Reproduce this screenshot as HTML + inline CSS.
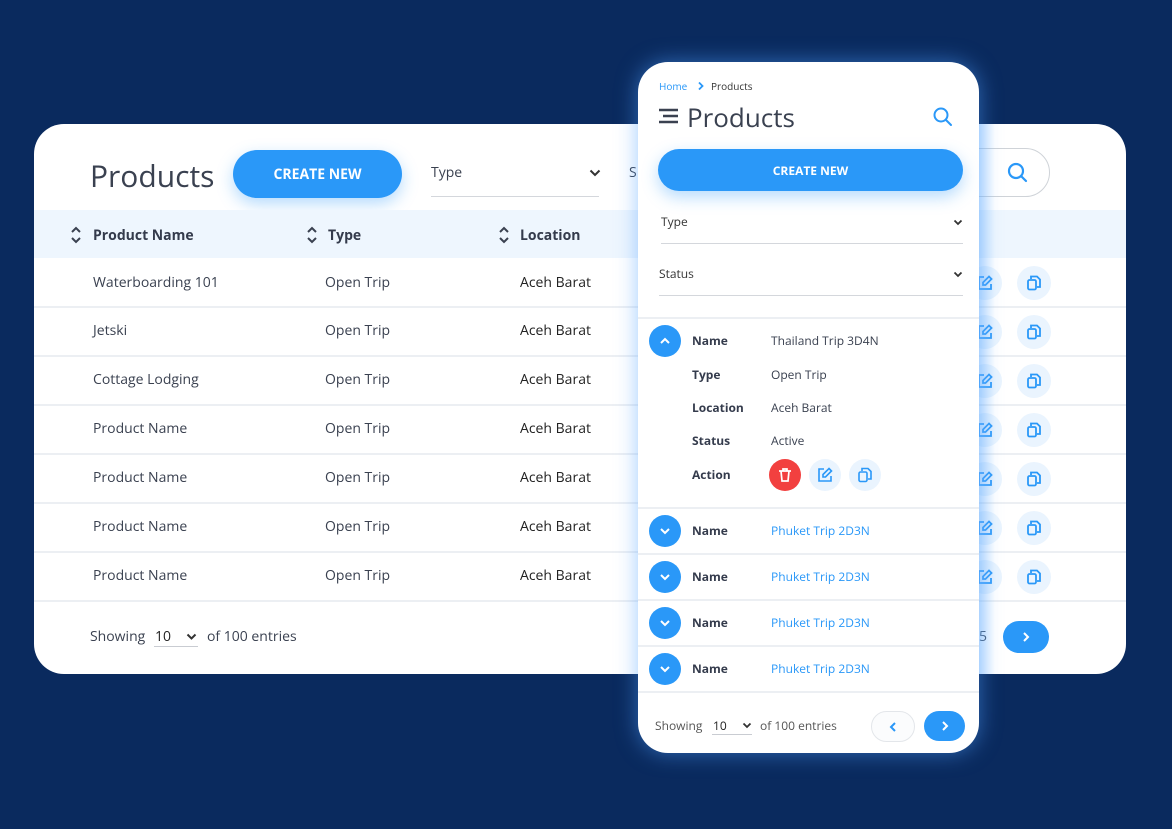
<!DOCTYPE html>
<html><head><meta charset="utf-8"><style>
*{margin:0;padding:0;box-sizing:border-box}
body{width:1172px;height:829px;background:#0a2a5e;position:relative;overflow:hidden;font-family:"Open Sans","Liberation Sans",sans-serif;color:#3a4150}
.a{position:absolute}
.card{left:34px;top:124px;width:1092px;height:550px;background:#fff;border-radius:30px;overflow:hidden}
.hdr{left:0;top:86px;width:1092px;height:48px;background:#eef6fe}
.sep{height:2px;background:#eceff3}
.t{font-size:14px;white-space:nowrap}
.th{font-size:14px;font-weight:bold;color:#343b4c}
.btn{background:#2a98f8;color:#fff;font-weight:bold;font-size:13px;display:flex;align-items:center;justify-content:center;border-radius:30px;box-shadow:0 6px 16px rgba(42,152,248,.35)}
.ic{width:34px;height:34px;border-radius:50%;background:#eaf4fe;display:flex;align-items:center;justify-content:center}
.mob{left:638px;top:62px;width:341px;height:691px;background:#fff;border-radius:30px;overflow:hidden;box-shadow:0 0 22px rgba(80,160,255,.55);z-index:5}
.circ{width:32px;height:32px;border-radius:50%;background:#2a98f8;display:flex;align-items:center;justify-content:center}
.lb{font-size:12px;font-weight:bold;color:#343b4c}
.vl{font-size:12px;color:#3a4150}
.lk{font-size:12px;color:#2a98f8}
</style></head><body>
<div class="a card">
  <div class="a" style="left:56px;top:31px;font-size:30px;color:#3a4150">Products</div>
  <div class="a btn" style="left:199px;top:26px;width:169px;height:48px;font-size:14px">CREATE NEW</div>
  <div class="a t" style="left:397px;top:39px">Type</div>
  <svg class="a" style="left:555px;top:45px" width="12" height="8"><path d="M1.5 1.5l4.5 4.5 4.5-4.5" stroke="#333" stroke-width="2" fill="none"/></svg>
  <div class="a" style="left:397px;top:72px;width:168px;height:1px;background:#d4d7dc"></div>
  <div class="a t" style="left:595px;top:39px">S</div>
  <div class="a" style="left:900px;top:24px;width:116px;height:49px;border:1px solid #cfd3d8;border-radius:25px"></div>
  <svg class="a" style="left:973px;top:38px" width="22" height="22"><circle cx="9" cy="9" r="7" stroke="#2a98f8" stroke-width="2.2" fill="none"/><path d="M14 14l5 5" stroke="#2a98f8" stroke-width="2.2" stroke-linecap="round"/></svg>
  <div class="a hdr"></div>
  <svg class="a" style="left:36px;top:101px" width="12" height="20"><path d="M2 7l4-4 4 4M2 13l4 4 4-4" stroke="#3a4150" stroke-width="2" fill="none"/></svg>
  <div class="a th" style="left:59px;top:102px">Product Name</div>
  <svg class="a" style="left:272px;top:101px" width="12" height="20"><path d="M2 7l4-4 4 4M2 13l4 4 4-4" stroke="#3a4150" stroke-width="2" fill="none"/></svg>
  <div class="a th" style="left:294px;top:102px">Type</div>
  <svg class="a" style="left:464px;top:101px" width="12" height="20"><path d="M2 7l4-4 4 4M2 13l4 4 4-4" stroke="#3a4150" stroke-width="2" fill="none"/></svg>
  <div class="a th" style="left:486px;top:102px">Location</div>
  <div class="a" style="left:0;top:134px;width:1092px">
    <div style="position:relative;height:48px"><span class="a t" style="left:59px;top:15px">Waterboarding 101</span><span class="a t" style="left:291px;top:15px">Open Trip</span><span class="a t" style="left:486px;top:15px;color:#222">Aceh Barat</span></div>
    <div class="sep"></div>
    <div style="position:relative;height:47px"><span class="a t" style="left:59px;top:13px">Jetski</span><span class="a t" style="left:291px;top:13px">Open Trip</span><span class="a t" style="left:486px;top:13px;color:#222">Aceh Barat</span></div>
    <div class="sep"></div>
    <div style="position:relative;height:47px"><span class="a t" style="left:59px;top:13px">Cottage Lodging</span><span class="a t" style="left:291px;top:13px">Open Trip</span><span class="a t" style="left:486px;top:13px;color:#222">Aceh Barat</span></div>
    <div class="sep"></div>
    <div style="position:relative;height:47px"><span class="a t" style="left:59px;top:13px">Product Name</span><span class="a t" style="left:291px;top:13px">Open Trip</span><span class="a t" style="left:486px;top:13px;color:#222">Aceh Barat</span></div>
    <div class="sep"></div>
    <div style="position:relative;height:47px"><span class="a t" style="left:59px;top:13px">Product Name</span><span class="a t" style="left:291px;top:13px">Open Trip</span><span class="a t" style="left:486px;top:13px;color:#222">Aceh Barat</span></div>
    <div class="sep"></div>
    <div style="position:relative;height:47px"><span class="a t" style="left:59px;top:13px">Product Name</span><span class="a t" style="left:291px;top:13px">Open Trip</span><span class="a t" style="left:486px;top:13px;color:#222">Aceh Barat</span></div>
    <div class="sep"></div>
    <div style="position:relative;height:47px"><span class="a t" style="left:59px;top:13px">Product Name</span><span class="a t" style="left:291px;top:13px">Open Trip</span><span class="a t" style="left:486px;top:13px;color:#222">Aceh Barat</span></div>
    <div class="sep"></div>
  </div>
  <div class="a t" style="left:56px;top:503px">Showing</div>
  <div class="a t" style="left:121px;top:503px;color:#222">10</div>
  <svg class="a" style="left:152px;top:509px" width="11" height="7"><path d="M1.5 1.5l4 4 4-4" stroke="#333" stroke-width="2" fill="none"/></svg>
  <div class="a" style="left:120px;top:522px;width:44px;height:1px;background:#c9ccd2"></div>
  <div class="a t" style="left:173px;top:503px">of 100 entries</div>
  <div class="a t" style="left:945px;top:503px">5</div>
  <div class="a btn" style="left:969px;top:497px;width:46px;height:32px;box-shadow:none"><svg width="10" height="12"><path d="M3 2l4 4-4 4" stroke="#fff" stroke-width="2" fill="none"/></svg></div>
</div>
<div class="a" style="left:968px;top:266px;width:100px;z-index:1">
  <div style="display:flex;flex-direction:column">
    <div style="height:49px;display:flex;gap:15px"><div class="ic"><svg width="16" height="16"><path d="M7 2H2v12h12V9" stroke="#2a98f8" stroke-width="1.8" fill="none"/><path d="M12 1.5l2.5 2.5-6 6H6V7.5z" stroke="#2a98f8" stroke-width="1.8" fill="none"/></svg></div><div class="ic"><svg width="16" height="16"><path d="M5 4V1.5h6l3 3V12h-3" stroke="#2a98f8" stroke-width="1.8" fill="none"/><rect x="2" y="5" width="8" height="9.5" rx="1.5" stroke="#2a98f8" stroke-width="1.8" fill="none"/></svg></div></div>
    <div style="height:49px;display:flex;gap:15px"><div class="ic"><svg width="16" height="16"><path d="M7 2H2v12h12V9" stroke="#2a98f8" stroke-width="1.8" fill="none"/><path d="M12 1.5l2.5 2.5-6 6H6V7.5z" stroke="#2a98f8" stroke-width="1.8" fill="none"/></svg></div><div class="ic"><svg width="16" height="16"><path d="M5 4V1.5h6l3 3V12h-3" stroke="#2a98f8" stroke-width="1.8" fill="none"/><rect x="2" y="5" width="8" height="9.5" rx="1.5" stroke="#2a98f8" stroke-width="1.8" fill="none"/></svg></div></div>
    <div style="height:49px;display:flex;gap:15px"><div class="ic"><svg width="16" height="16"><path d="M7 2H2v12h12V9" stroke="#2a98f8" stroke-width="1.8" fill="none"/><path d="M12 1.5l2.5 2.5-6 6H6V7.5z" stroke="#2a98f8" stroke-width="1.8" fill="none"/></svg></div><div class="ic"><svg width="16" height="16"><path d="M5 4V1.5h6l3 3V12h-3" stroke="#2a98f8" stroke-width="1.8" fill="none"/><rect x="2" y="5" width="8" height="9.5" rx="1.5" stroke="#2a98f8" stroke-width="1.8" fill="none"/></svg></div></div>
    <div style="height:49px;display:flex;gap:15px"><div class="ic"><svg width="16" height="16"><path d="M7 2H2v12h12V9" stroke="#2a98f8" stroke-width="1.8" fill="none"/><path d="M12 1.5l2.5 2.5-6 6H6V7.5z" stroke="#2a98f8" stroke-width="1.8" fill="none"/></svg></div><div class="ic"><svg width="16" height="16"><path d="M5 4V1.5h6l3 3V12h-3" stroke="#2a98f8" stroke-width="1.8" fill="none"/><rect x="2" y="5" width="8" height="9.5" rx="1.5" stroke="#2a98f8" stroke-width="1.8" fill="none"/></svg></div></div>
    <div style="height:49px;display:flex;gap:15px"><div class="ic"><svg width="16" height="16"><path d="M7 2H2v12h12V9" stroke="#2a98f8" stroke-width="1.8" fill="none"/><path d="M12 1.5l2.5 2.5-6 6H6V7.5z" stroke="#2a98f8" stroke-width="1.8" fill="none"/></svg></div><div class="ic"><svg width="16" height="16"><path d="M5 4V1.5h6l3 3V12h-3" stroke="#2a98f8" stroke-width="1.8" fill="none"/><rect x="2" y="5" width="8" height="9.5" rx="1.5" stroke="#2a98f8" stroke-width="1.8" fill="none"/></svg></div></div>
    <div style="height:49px;display:flex;gap:15px"><div class="ic"><svg width="16" height="16"><path d="M7 2H2v12h12V9" stroke="#2a98f8" stroke-width="1.8" fill="none"/><path d="M12 1.5l2.5 2.5-6 6H6V7.5z" stroke="#2a98f8" stroke-width="1.8" fill="none"/></svg></div><div class="ic"><svg width="16" height="16"><path d="M5 4V1.5h6l3 3V12h-3" stroke="#2a98f8" stroke-width="1.8" fill="none"/><rect x="2" y="5" width="8" height="9.5" rx="1.5" stroke="#2a98f8" stroke-width="1.8" fill="none"/></svg></div></div>
    <div style="height:49px;display:flex;gap:15px"><div class="ic"><svg width="16" height="16"><path d="M7 2H2v12h12V9" stroke="#2a98f8" stroke-width="1.8" fill="none"/><path d="M12 1.5l2.5 2.5-6 6H6V7.5z" stroke="#2a98f8" stroke-width="1.8" fill="none"/></svg></div><div class="ic"><svg width="16" height="16"><path d="M5 4V1.5h6l3 3V12h-3" stroke="#2a98f8" stroke-width="1.8" fill="none"/><rect x="2" y="5" width="8" height="9.5" rx="1.5" stroke="#2a98f8" stroke-width="1.8" fill="none"/></svg></div></div>
  </div>
</div>
<div class="a" style="left:979px;top:124px;width:16px;height:550px;background:linear-gradient(90deg,rgba(120,185,255,.35),rgba(120,185,255,0));z-index:2"></div>

<div class="a mob">
  <div class="a" style="left:21px;top:17px;font-size:10px;color:#2a98f8">Home</div>
  <svg class="a" style="left:59px;top:19px" width="8" height="10"><path d="M2 1.5l3.5 3.5L2 8.5" stroke="#2a98f8" stroke-width="1.8" fill="none"/></svg>
  <div class="a" style="left:73px;top:17px;font-size:10px;color:#333">Products</div>
  <svg class="a" style="left:19px;top:45px" width="22" height="18"><path d="M2 3h19M6 9h15M2 15h19" stroke="#3a4150" stroke-width="2.4"/></svg>
  <div class="a" style="left:49px;top:37px;font-size:26px;color:#3a4150">Products</div>
  <svg class="a" style="left:295px;top:45px" width="20" height="20"><circle cx="8" cy="8" r="6.5" stroke="#2a98f8" stroke-width="2" fill="none"/><path d="M13 13l5 5" stroke="#2a98f8" stroke-width="2" stroke-linecap="round"/></svg>
  <div class="a btn" style="left:20px;top:87px;width:305px;height:42px;font-size:12px">CREATE NEW</div>
  <div class="a" style="left:23px;top:151px;font-size:12px;color:#333">Type</div>
  <svg class="a" style="left:315px;top:157px" width="10" height="7"><path d="M1.5 1.5l3.5 3.5 3.5-3.5" stroke="#333" stroke-width="1.8" fill="none"/></svg>
  <div class="a" style="left:23px;top:181px;width:302px;height:1px;background:#d4d7dc"></div>
  <div class="a" style="left:21px;top:203px;font-size:12px;color:#333">Status</div>
  <svg class="a" style="left:315px;top:209px" width="10" height="7"><path d="M1.5 1.5l3.5 3.5 3.5-3.5" stroke="#333" stroke-width="1.8" fill="none"/></svg>
  <div class="a" style="left:21px;top:233px;width:304px;height:1px;background:#d4d7dc"></div>
  <div class="a sep" style="left:0;top:255px;width:341px"></div>
  <div class="a circ" style="left:11px;top:263px"><svg width="12" height="8"><path d="M2 6l4-4 4 4" stroke="#fff" stroke-width="2" fill="none"/></svg></div>
  <div class="a lb" style="left:54px;top:270px">Name</div><div class="a vl" style="left:133px;top:270px">Thailand Trip 3D4N</div>
  <div class="a lb" style="left:54px;top:304px">Type</div><div class="a vl" style="left:133px;top:304px">Open Trip</div>
  <div class="a lb" style="left:54px;top:337px">Location</div><div class="a vl" style="left:133px;top:337px">Aceh Barat</div>
  <div class="a lb" style="left:54px;top:370px">Status</div><div class="a vl" style="left:133px;top:370px">Active</div>
  <div class="a lb" style="left:54px;top:404px">Action</div>
  <div class="a circ" style="left:131px;top:397px;background:#f2403f"><svg width="14" height="16"><path d="M1 4h12M5 4V2h4v2M3 4l1 10h6l1-10" stroke="#fff" stroke-width="1.7" fill="none"/></svg></div>
  <div class="a circ" style="left:171px;top:397px;background:#eaf4fe"><svg width="16" height="16"><path d="M7 2H2v12h12V9" stroke="#2a98f8" stroke-width="1.6" fill="none"/><path d="M12 1.5l2.5 2.5-6 6H6V7.5z" stroke="#2a98f8" stroke-width="1.6" fill="none"/></svg></div>
  <div class="a circ" style="left:211px;top:397px;background:#eaf4fe"><svg width="16" height="16"><path d="M5 4V1.5h6l3 3V12h-3" stroke="#2a98f8" stroke-width="1.6" fill="none"/><rect x="2" y="5" width="8" height="9.5" rx="1.5" stroke="#2a98f8" stroke-width="1.6" fill="none"/></svg></div>
  <div class="a sep" style="left:0;top:445px;width:341px"></div>
  <div class="a circ" style="left:11px;top:453px"><svg width="12" height="8"><path d="M2 2l4 4 4-4" stroke="#fff" stroke-width="2" fill="none"/></svg></div>
  <div class="a lb" style="left:54px;top:460px">Name</div><div class="a lk" style="left:133px;top:460px">Phuket Trip 2D3N</div>
  <div class="a sep" style="left:0;top:491px;width:341px"></div>
  <div class="a circ" style="left:11px;top:499px"><svg width="12" height="8"><path d="M2 2l4 4 4-4" stroke="#fff" stroke-width="2" fill="none"/></svg></div>
  <div class="a lb" style="left:54px;top:506px">Name</div><div class="a lk" style="left:133px;top:506px">Phuket Trip 2D3N</div>
  <div class="a sep" style="left:0;top:537px;width:341px"></div>
  <div class="a circ" style="left:11px;top:545px"><svg width="12" height="8"><path d="M2 2l4 4 4-4" stroke="#fff" stroke-width="2" fill="none"/></svg></div>
  <div class="a lb" style="left:54px;top:552px">Name</div><div class="a lk" style="left:133px;top:552px">Phuket Trip 2D3N</div>
  <div class="a sep" style="left:0;top:583px;width:341px"></div>
  <div class="a circ" style="left:11px;top:591px"><svg width="12" height="8"><path d="M2 2l4 4 4-4" stroke="#fff" stroke-width="2" fill="none"/></svg></div>
  <div class="a lb" style="left:54px;top:598px">Name</div><div class="a lk" style="left:133px;top:598px">Phuket Trip 2D3N</div>
  <div class="a sep" style="left:0;top:629px;width:341px"></div>
  <div class="a" style="left:17px;top:655px;font-size:12px;color:#555">Showing</div>
  <div class="a" style="left:75px;top:655px;font-size:12px;color:#222">10</div>
  <svg class="a" style="left:104px;top:660px" width="10" height="7"><path d="M1.5 1.5l3.5 3.5 3.5-3.5" stroke="#333" stroke-width="1.8" fill="none"/></svg>
  <div class="a" style="left:74px;top:672px;width:40px;height:1px;background:#c9ccd2"></div>
  <div class="a" style="left:122px;top:655px;font-size:12px;color:#555">of 100 entries</div>
  <div class="a" style="left:233px;top:649px;width:44px;height:31px;border:1px solid #e3e6ea;border-radius:16px;background:#fbfcfd;display:flex;align-items:center;justify-content:center"><svg width="10" height="12"><path d="M7 2L3 6l4 4" stroke="#2a98f8" stroke-width="2" fill="none"/></svg></div>
  <div class="a btn" style="left:286px;top:649px;width:41px;height:30px;box-shadow:none"><svg width="10" height="12"><path d="M3 2l4 4-4 4" stroke="#fff" stroke-width="2" fill="none"/></svg></div>
</div>
</body></html>
